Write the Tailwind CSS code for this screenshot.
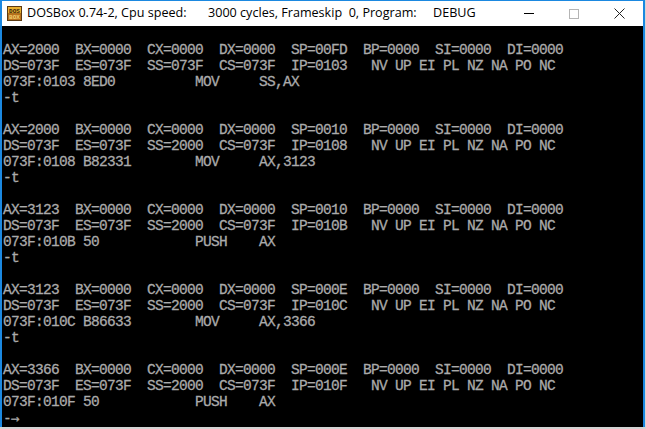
<!DOCTYPE html>
<html lang="en">
<head>
    <meta charset="UTF-8">
    <title>DOSBox</title>
    <script src="https://cdn.jsdelivr.net/npm/@tailwindcss/browser@4"></script>
</head>
<body class="w-[646px] h-[429px] overflow-hidden bg-[#d4d4d4]">
    <div class="w-[645px] h-[427px] border-x-2 border-t border-b border-[#1b88e0] bg-white flex flex-col">
        <!-- title bar -->
        <div class="h-[25px] shrink-0 flex items-center text-[12.6px] text-black whitespace-pre font-['Open_Sans',sans-serif]">
            <svg class="ml-[5px] mr-[5px]" width="15" height="15" viewBox="0 0 15 15">
                <rect width="15" height="15" fill="#5b3a12"/>
                <rect x="1" y="1" width="13" height="6.5" fill="#e8b030"/>
                <rect x="1" y="7.5" width="13" height="6.5" fill="#b8701c"/>
                <text x="7.5" y="6.5" text-anchor="middle" font-size="6" font-weight="700" font-family="Liberation Mono" fill="#3a2208">DOS</text>
                <text x="7.5" y="13" text-anchor="middle" font-size="6" font-weight="700" font-family="Liberation Mono" fill="#f0d070">BOX</text>
            </svg>
            <span class="w-[181px]">DOSBox 0.74-2, Cpu speed:</span>
            <span class="w-[225px]">3000 cycles, Frameskip  0, Program:</span>
            <span>DEBUG</span>
            <div class="ml-auto flex items-center mr-[18px] gap-[35px]">
                <div class="w-[10px] h-px bg-black"></div>
                <div class="w-[10px] h-[10px] border border-[#b5b5b5]"></div>
                <svg width="11" height="11" viewBox="0 0 11 11"><path d="M0.5 0.5L10.5 10.5M10.5 0.5L0.5 10.5" stroke="#222" fill="none"/></svg>
            </div>
        </div>
        <!-- dos screen -->
        <pre class="flex-1 bg-black text-[#aaaaaa] text-[14.5px] tracking-[-0.7px] [-webkit-text-stroke:0.3px_#aaaaaa] leading-[16px] pl-px font-['Liberation_Mono',monospace]">

AX=2000  BX=0000  CX=0000  DX=0000  SP=00FD  BP=0000  SI=0000  DI=0000
DS=073F  ES=073F  SS=073F  CS=073F  IP=0103   NV UP EI PL NZ NA PO NC
073F:0103 8ED0          MOV     SS,AX
-t

AX=2000  BX=0000  CX=0000  DX=0000  SP=0010  BP=0000  SI=0000  DI=0000
DS=073F  ES=073F  SS=2000  CS=073F  IP=0108   NV UP EI PL NZ NA PO NC
073F:0108 B82331        MOV     AX,3123
-t

AX=3123  BX=0000  CX=0000  DX=0000  SP=0010  BP=0000  SI=0000  DI=0000
DS=073F  ES=073F  SS=2000  CS=073F  IP=010B   NV UP EI PL NZ NA PO NC
073F:010B 50            PUSH    AX
-t

AX=3123  BX=0000  CX=0000  DX=0000  SP=000E  BP=0000  SI=0000  DI=0000
DS=073F  ES=073F  SS=2000  CS=073F  IP=010C   NV UP EI PL NZ NA PO NC
073F:010C B86633        MOV     AX,3366
-t

AX=3366  BX=0000  CX=0000  DX=0000  SP=000E  BP=0000  SI=0000  DI=0000
DS=073F  ES=073F  SS=2000  CS=073F  IP=010F   NV UP EI PL NZ NA PO NC
073F:010F 50            PUSH    AX
<span class="font-['DejaVu_Sans_Mono',monospace]">-→</span></pre>
    </div>
</body>
</html>
